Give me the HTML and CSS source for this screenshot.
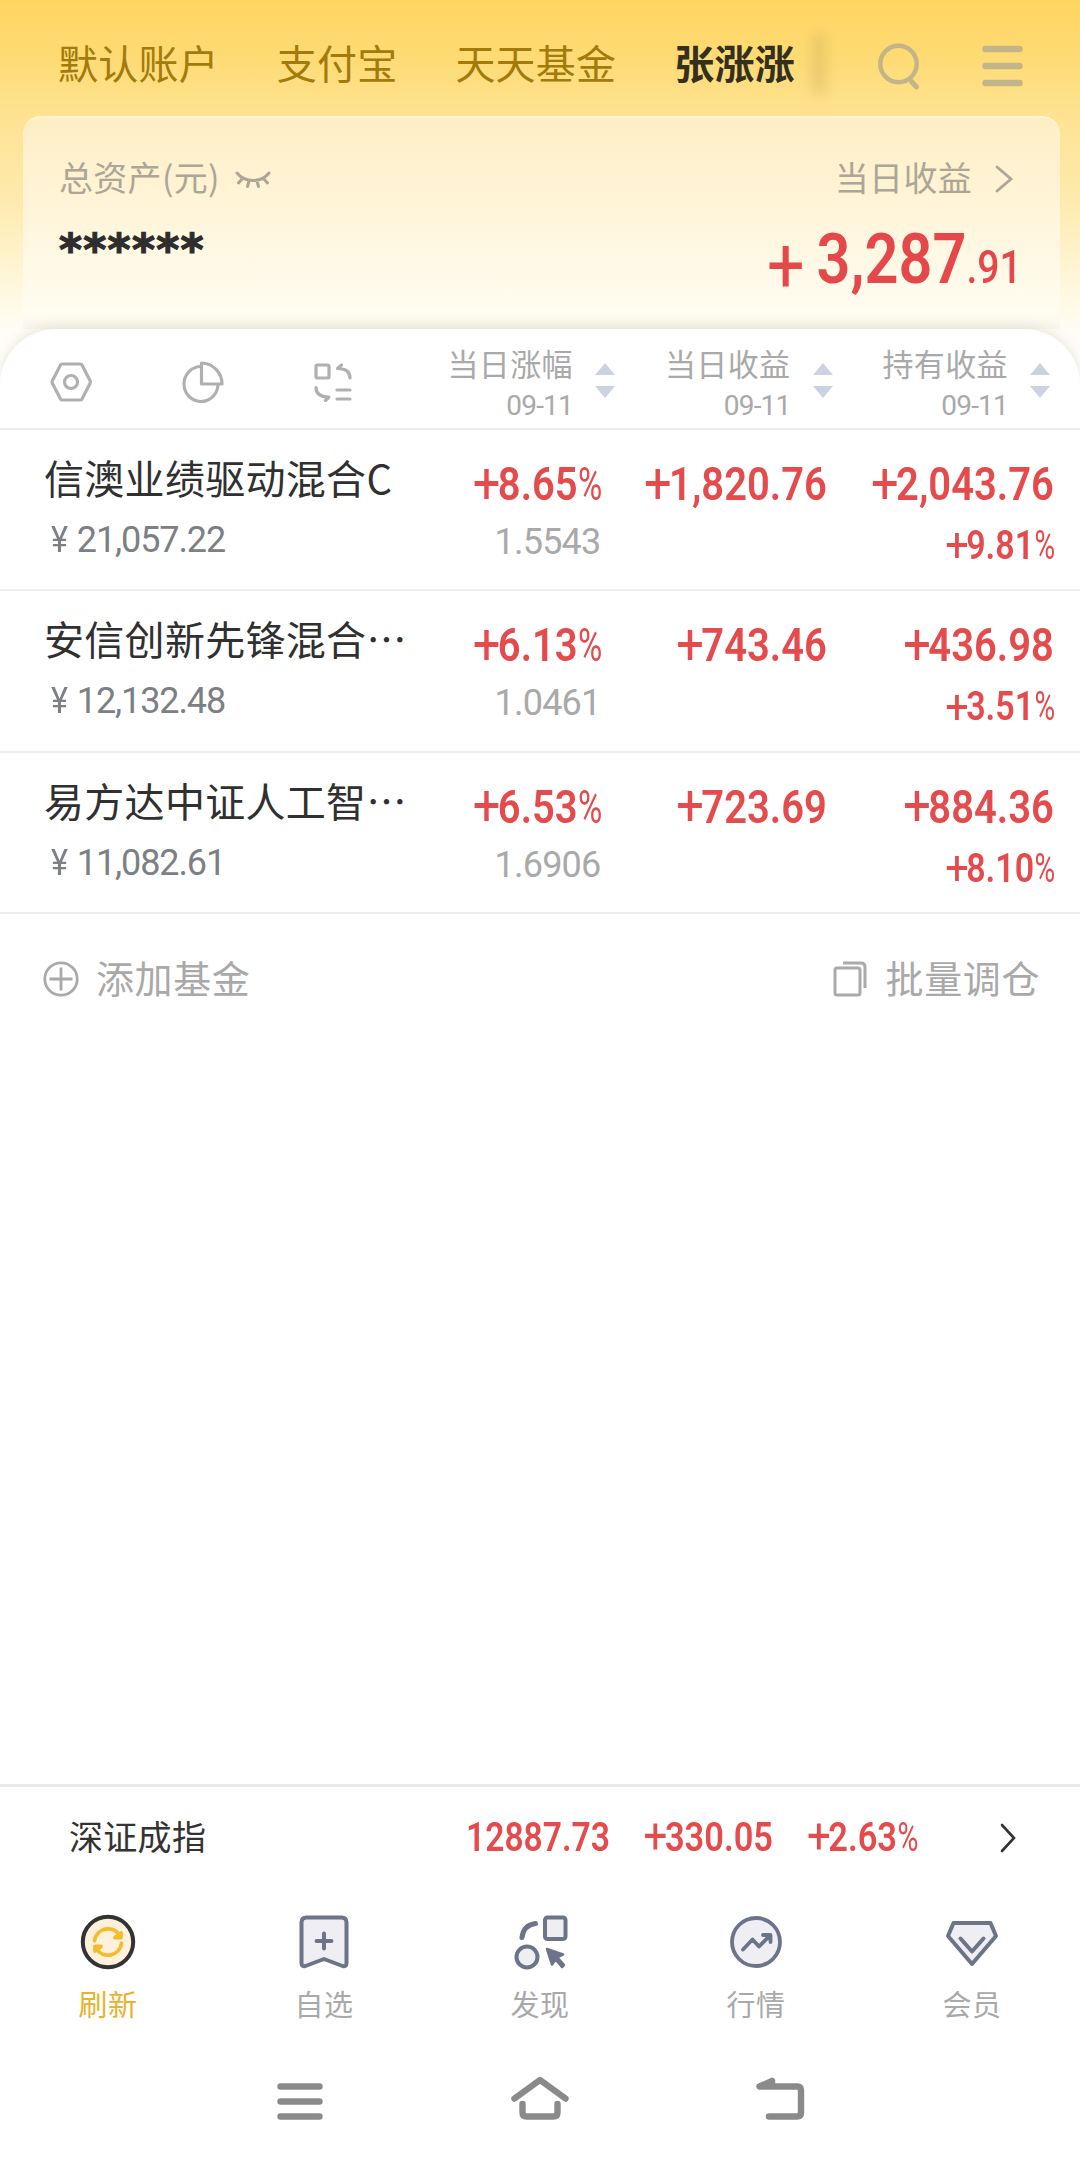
FILE: index.html
```html
<!DOCTYPE html>
<html lang="zh-CN">
<head>
<meta charset="utf-8">
<title>基金持仓</title>
<link rel="stylesheet" href="styles.css">
</head>
<body>
<div class="screen">
  <header class="topbar">
    <nav class="accounts">
      <span>默认账户</span><span>支付宝</span><span>天天基金</span><span class="current">张涨涨</span>
    </nav>
    <i class="edge"></i>
    <svg class="search" width="48" height="56" viewBox="0 0 48 56" fill="none" stroke="#c3b48a" stroke-width="4.4" stroke-linecap="round"><circle cx="21.500" cy="28" r="18.2"/><path d="M34.500 45.500l5 5.500" stroke-width="5"/></svg>
    <svg class="menu" width="41" height="44" viewBox="0 0 41 44" stroke="#c3b48a" stroke-width="6.400" stroke-linecap="round"><path d="M3.500 5h34M3.500 22h34M3.500 39h34"/></svg>
  </header>

  <section class="summary">
    <div class="line">
      <span class="caption">总资产(元)
        <svg class="eye" width="36" height="18" viewBox="0 0 36 18" fill="none" stroke="#aba695" stroke-width="3" stroke-linecap="round"><path d="M2 2Q8 9.500 18 9.500T34 2M7.500 7.500L3.500 12M14 10l-1.500 5.500M22 10l1.500 5.500M28.500 7.500l4 4.500"/></svg>
      </span>
      <span class="caption">当日收益
        <svg class="go" width="20" height="28" viewBox="0 0 20 28" fill="none" stroke="#aba695" stroke-width="2.800" stroke-linecap="round"><path d="M3 2l14 12L3 26"/></svg>
      </span>
    </div>
    <div class="line amounts">
      <span class="hidden-sum">******</span>
      <span class="gain num"><span class="plus">+</span><span class="whole">3,287</span><span class="cents">.91</span></span>
    </div>
  </section>

  <main class="sheet">
    <div class="head">
      <div class="tools">
        <svg width="42" height="40" viewBox="0 0 42 40" fill="none" stroke="#b0b0b0" stroke-width="3.200" stroke-linejoin="round"><path d="M12 2h18.500q1 0 1.500 1l8 15.500q.8 1.500 0 3L32 37q-.5 1-1.500 1H12q-1 0-1.500-1L2.500 21.500q-.8-1.500 0-3L10.500 3q.5-1 1.500-1z"/><circle cx="21" cy="20" r="6.500"/></svg>
        <svg width="42" height="42" viewBox="0 0 42 42" fill="none" stroke="#b0b0b0" stroke-width="3.200" stroke-linejoin="round"><path d="M19 5.500A17 17.500 0 1 0 36 23.500"/><path d="M19.500 2v21H40A21 21 0 0 0 19.500 2z"/></svg>
        <svg width="38" height="40" viewBox="0 0 38 40" fill="none" stroke="#b0b0b0" stroke-width="3.200" stroke-linejoin="round" stroke-linecap="round"><rect x="2" y="3" width="13" height="13" rx="1.500"/><path d="M36 16C36 9.500 31 6.500 23.500 6.500L27.500 3M2 25.500c0 6 4.500 9.500 13 9.500L11.500 38.500M23 28h13M23 37h13"/></svg>
      </div>
      <div class="sorter"><div>当日涨幅<small>09-11</small></div><svg width="20" height="35" viewBox="0 0 20 35" fill="#cdd2e3"><path d="M10 0l10 12H0zM10 35L0 23h20z"/></svg></div>
      <div class="sorter"><div>当日收益<small>09-11</small></div><svg width="20" height="35" viewBox="0 0 20 35" fill="#cdd2e3"><path d="M10 0l10 12H0zM10 35L0 23h20z"/></svg></div>
      <div class="sorter"><div>持有收益<small>09-11</small></div><svg width="20" height="35" viewBox="0 0 20 35" fill="#cdd2e3"><path d="M10 0l10 12H0zM10 35L0 23h20z"/></svg></div>
    </div>

    <div class="fund">
      <div class="title">信澳业绩驱动混合C<span class="held"><i>¥</i>21,057.22</span></div>
      <div class="cell"><span class="num big"><i>+</i>8.65<em>%</em></span><span class="nav-value">1.5543</span></div>
      <div class="cell"><span class="num big"><i>+</i>1,820.76</span></div>
      <div class="cell"><span class="num big"><i>+</i>2,043.76</span><span class="num rate"><i>+</i>9.81<em>%</em></span></div>
    </div>
    <div class="fund">
      <div class="title">安信创新先锋混合…<span class="held"><i>¥</i>12,132.48</span></div>
      <div class="cell"><span class="num big"><i>+</i>6.13<em>%</em></span><span class="nav-value">1.0461</span></div>
      <div class="cell"><span class="num big"><i>+</i>743.46</span></div>
      <div class="cell"><span class="num big"><i>+</i>436.98</span><span class="num rate"><i>+</i>3.51<em>%</em></span></div>
    </div>
    <div class="fund">
      <div class="title">易方达中证人工智…<span class="held"><i>¥</i>11,082.61</span></div>
      <div class="cell"><span class="num big"><i>+</i>6.53<em>%</em></span><span class="nav-value">1.6906</span></div>
      <div class="cell"><span class="num big"><i>+</i>723.69</span></div>
      <div class="cell"><span class="num big"><i>+</i>884.36</span><span class="num rate"><i>+</i>8.10<em>%</em></span></div>
    </div>

    <div class="actions">
      <span><svg width="36" height="36" viewBox="0 0 36 36" fill="none" stroke="#aaa" stroke-width="2.800"><circle cx="18" cy="18" r="16.200"/><path d="M6.500 18h23M18 6.500v23"/></svg>添加基金</span>
      <span><svg width="34" height="36" viewBox="0 0 34 36" fill="none" stroke="#aaa" stroke-width="3"><rect x="2" y="7" width="25" height="27" rx="2"/><path d="M10 2h18q4 0 4 4v21"/></svg>批量调仓</span>
    </div>
  </main>

  <footer class="bottom">
    <div class="index">
      <span class="index-name">深证成指</span>
      <span class="num quote q1">12887.73</span>
      <span class="num quote q2"><i>+</i>330.05</span>
      <span class="num quote q3"><i>+</i>2.63<em>%</em></span>
      <svg width="18" height="30" viewBox="0 0 18 30" fill="none" stroke="#333" stroke-width="2.600" stroke-linecap="round"><path d="M3 2l12 13L3 28"/></svg>
    </div>
    <nav class="tabs">
      <span class="on"><svg width="56" height="56" viewBox="0 0 56 56" fill="none"><circle cx="28" cy="28" r="25.200" fill="#fdf0dc" stroke="#333" stroke-width="4"/><g stroke="#f2bd2c" stroke-width="3.800" stroke-linecap="round" stroke-linejoin="round"><path d="M14.500 26.500A13.700 13.700 0 0 1 39.500 21M41.500 29.500A13.700 13.700 0 0 1 16.500 35"/><path d="M41 19v4.500h-6zM15 37v-4.500h6z" fill="#f2bd2c"/></g></svg>刷新</span>
      <span><svg width="56" height="56" viewBox="0 0 56 56" fill="#efeff3" stroke="#6d7389" stroke-width="4" stroke-linejoin="round" stroke-linecap="round"><path d="M10.500 3.500h35q5 0 5 5V49q0 4-4 3L28 45 9.500 52q-4 1-4-3V8.500q0-5 5-5zM28 19.500v15M20.500 27h15"/></svg>自选</span>
      <span><svg width="56" height="56" viewBox="0 0 56 56" fill="#efeff3" stroke="#6d7389" stroke-width="4" stroke-linejoin="round" stroke-linecap="round"><rect x="33" y="3.500" width="20.500" height="21.500" rx="2.500"/><circle cx="15" cy="43" r="10.500"/><path d="M10 23.500Q11.500 11 23.500 9.500" fill="none" stroke-width="5"/><path d="M35 35l16 5.500-5.500 3 6.500 7.500-2 2-6.500-7.500-3.500 5z" fill="#6d7389" stroke-width="2.500"/></svg>发现</span>
      <span><svg width="56" height="56" viewBox="0 0 56 56" fill="none" stroke="#6d7389" stroke-width="3.800" stroke-linejoin="round" stroke-linecap="round"><circle cx="28" cy="28" r="24" fill="#efeff3"/><path d="M15 35.500l9.500-10 6.500 7 11-11M35 21h7.500v7"/></svg>行情</span>
      <span><svg width="56" height="56" viewBox="0 0 56 56" fill="none" stroke="#6d7389" stroke-width="4" stroke-linejoin="round" stroke-linecap="round"><path d="M9.500 9h37l5.500 13L28 50 4 22z" fill="#efeff3"/><path d="M16.500 24.500L28 37.500l11.500-13"/></svg>会员</span>
    </nav>
    <div class="system">
      <svg width="60" height="50" viewBox="0 0 60 50"><path d="M10.500 10.500h39M10.500 25.500h39M10.500 40.500h39"/></svg>
      <svg width="60" height="50" viewBox="0 0 60 50"><path d="M4.500 22.500L30 4l25.500 18.500M12.500 28v8.500q0 4 4 4h27q4 0 4-4V28"/></svg>
      <svg width="60" height="50" viewBox="0 0 60 50"><path d="M22 5l-12.500 5.500H47q4 0 4 4v22q0 4-4 4H19M22 5v4"/></svg>
    </div>
  </footer>
</div>
</body>
</html>
```
FILE: styles.css
```css
* { box-sizing: border-box; }
body { margin: 0; font-family: "Noto Sans CJK SC", sans-serif; }
svg { display: block; flex: none; }
i, em { font-style: normal; }

.screen {
  width: 1080px; height: 2164px; overflow: hidden;
  display: flex; flex-direction: column;
  background: linear-gradient(#ffd561 0, #fedb75 60px, #fee394 120px, #feeaad 200px, #fff8df 290px, #fffdf4 330px, #fff 390px);
}

/* account switcher */
.topbar { height: 116px; padding: 12px 57px 0 58px; display: flex; align-items: center; flex: none; }
.accounts { display: flex; gap: 58px; font-size: 40px; letter-spacing: .2px; line-height: 60px; color: #a37a0c; margin-top: -5px; }
.accounts .current { font-weight: 700; color: #33301f; }
.edge { width: 12px; height: 60px; margin-left: 18px; background: #b89a4a; opacity: .34; filter: blur(7px); }
.search { margin: 0 0 0 52px; }
.menu { margin-left: auto; margin-top: 4px; }

.summary {
  flex: none; height: 213px; margin: 0 20px 0 23px; padding: 37px 38px 0 36px;
  border-radius: 18px 18px 0 0; border-top: 2px solid #fff6d2;
  background: linear-gradient(#feeec5, #fff5da 45%, #fffcf0 92%, #f8f6ee);
}
.line { display: flex; justify-content: space-between; }
.caption { display: flex; align-items: center; gap: 15px; font-size: 34px; letter-spacing: .3px; line-height: 44px; color: #aba695; }
.caption .eye { margin-top: 5px; }
.caption .go { margin: 3px 8px 0 7px; }
.amounts { height: 82px; }
.hidden-sum { font: 700 44px/60px "DejaVu Sans", sans-serif; letter-spacing: 1.300px; color: #2e2e2e; padding-top: 21px; -webkit-text-stroke: 1.200px #2e2e2e; }

.num { font-family: Roboto, sans-serif; font-weight: 600; color: #e34b4d; white-space: nowrap; display: block; transform: scaleX(.85); transform-origin: right; }
.num i { font-weight: 400; font-size: 1.220em; line-height: 0; margin-right: -3px; position: relative; top: .05em; }
.num em { display: inline-block; font-weight: 400; width: .58em; transform: scaleX(.83); transform-origin: left; }
.gain { line-height: 82px; padding-top: 19px; color: #e5484b; }
.gain .plus { font-size: 78px; font-weight: 400; line-height: 0; margin-right: 14px; position: relative; top: 9px; }
.gain .whole { font-size: 70px; }
.gain .cents { font-size: 46px; font-weight: 500; }

.sheet {
  flex: 1; background: #fff; border-radius: 56px 56px 0 0;
  box-shadow: 0 -2px 12px rgba(120, 110, 80, .16);
}
.head { height: 101px; border-bottom: 2px solid #ececec; display: flex; padding: 0 30px 0 50px; }
.tools { display: flex; gap: 90px; align-items: center; width: 304px; margin-top: 7px; height: 92px; }
.sorter { width: 217.500px; display: flex; justify-content: flex-end; gap: 22px; font-size: 31px; letter-spacing: .4px; line-height: 40px; color: #a9a9a9; padding-top: 14px; text-align: right; }
.sorter svg { margin-top: 20px; }
.tools + .sorter { margin-left: auto; }
.sorter small { display: block; font: 400 28px/34px Roboto, sans-serif; letter-spacing: -.800px; margin-top: 6px; }

.fund { height: 161.300px; border-bottom: 2px solid #ececec; display: flex; padding-right: 26px; }
.title { width: 414px; padding: 22px 0 0 44px; font-size: 40px; letter-spacing: .3px; line-height: 50px; color: #303030; white-space: nowrap; }
.held { display: block; font: 400 36px/44px Roboto, sans-serif; letter-spacing: -1.100px; color: #7c8084; margin-top: 16px; padding-left: 6px; }
.held i { margin-right: 9px; display: inline-block; transform: scaleX(.9); }
.cell { text-align: right; width: 227px; }
.title + .cell { width: 187px; }
.big { font-size: 47px; line-height: 50px; margin-top: 29px; }
.rate { font-size: 40px; line-height: 44px; margin-top: 15px; }
.nav-value { display: block; font: 400 36px/40px Roboto, sans-serif; letter-spacing: -.800px; color: #a9a9a9; margin-top: 13px; }

.actions { display: flex; justify-content: space-between; padding: 36px 40px 0 43px; font-size: 38px; letter-spacing: .6px; line-height: 54px; color: #a9a9a9; }
.actions span { display: flex; align-items: center; gap: 17px; }
.actions svg { margin-top: 4px; }
.actions span + span { gap: 19px; }

.bottom { flex: none; height: 380px; background: #fff; border-top: 3px solid #e9e9e9; }
.index { height: 102px; display: flex; align-items: center; padding: 0 63px 0 69px; font-size: 34px; letter-spacing: .3px; color: #333; }
.index-name { width: 140px; margin-top: -6px; }
.quote { font-size: 40.500px; letter-spacing: 0; text-align: right; margin-top: -2px; }
.q1 { width: 401px; transform: scaleX(.83); }
.q2 { width: 163px; }
.q3 { width: 144px; }
.index svg { margin-left: auto; }
.tabs { display: flex; margin-top: 25px; }
.tabs span { width: 216px; display: flex; flex-direction: column; align-items: center; font-size: 29px; letter-spacing: .6px; line-height: 40px; color: #a9a9a9; gap: 13px; }
.tabs .on { color: #eab22c; }
.system { display: flex; justify-content: center; gap: 180px; margin-top: 53px; }
.system svg { fill: none; stroke: #8a8a8a; stroke-width: 6.400; stroke-linecap: round; stroke-linejoin: round; }
```
